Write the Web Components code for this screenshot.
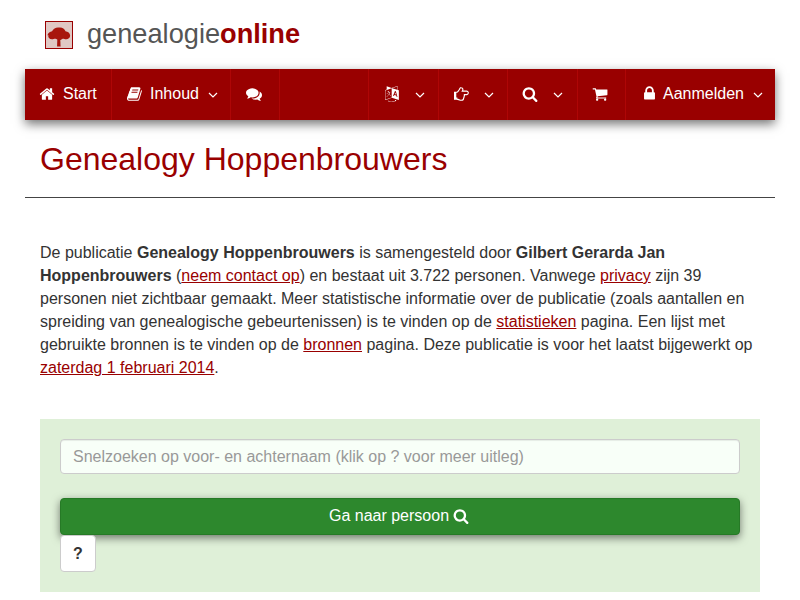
<!DOCTYPE html>
<html lang="nl">
<head>
<meta charset="utf-8">
<title>Genealogy Hoppenbrouwers</title>
<style>
html,body{margin:0;padding:0;background:#fff;height:600px;overflow:hidden}
body{font-family:"Liberation Sans",Arial,sans-serif;font-size:16px;line-height:23px;color:#333}
</style>
</head>
<body>
<go-page>
  <go-logo></go-logo>
  <go-nav>
    <go-nav-item icon="home" w="87" p="14" tg="8">Start</go-nav-item>
    <go-nav-item icon="book" w="119" p="14.5" tg="7.5" caret>Inhoud</go-nav-item>
    <go-nav-item icon="comments" w="49" p="15"></go-nav-item>
    <go-nav-item w="89"></go-nav-item>
    <go-nav-item icon="language" w="70" p="15" caret></go-nav-item>
    <go-nav-item icon="hand" w="69" p="15" cg="14" caret></go-nav-item>
    <go-nav-item icon="search" w="70" p="14" caret></go-nav-item>
    <go-nav-item icon="cart" w="48" p="13.5"></go-nav-item>
    <go-nav-item icon="lock" w="149" p="15" s="17" tg="5" caret last>Aanmelden</go-nav-item>
  </go-nav>
  <go-title>Genealogy Hoppenbrouwers</go-title>
  <go-intro>
    De publicatie <b>Genealogy Hoppenbrouwers</b> is samengesteld door <b>Gilbert Gerarda Jan Hoppenbrouwers</b> (<a href="#">neem contact op</a>) en bestaat uit 3.722 personen. Vanwege <a href="#">privacy</a> zijn 39 personen niet zichtbaar gemaakt. Meer statistische informatie over de publicatie (zoals aantallen en spreiding van genealogische gebeurtenissen) is te vinden op de <a href="#">statistieken</a> pagina. Een lijst met gebruikte bronnen is te vinden op de <a href="#">bronnen</a> pagina. Deze publicatie is voor het laatst bijgewerkt op <a href="#">zaterdag 1 februari 2014</a>.
  </go-intro>
  <go-search></go-search>
</go-page>
<script>
const FA={
home:"M1472 992v480q0 26-19 45t-45 19h-384v-384h-256v384h-384q-26 0-45-19t-19-45v-480q0-1 .5-3t.5-3l575-474 575 474q1 2 1 6zm223-69l-62 74q-8 9-21 11h-3q-13 0-21-7l-692-577-692 577q-12 8-24 7-13-2-21-11l-62-74q-8-10-7-23.5t11-21.5l719-599q32-26 76-26t76 26l244 204v-195q0-14 9-23t23-9h192q14 0 23 9t9 23v408l219 182q10 8 11 21.5t-7 23.5z",
book:"M1639 478q40 57 18 129l-275 906q-19 64-76.5 107.5t-122.5 43.5h-923q-77 0-148.5-53.5t-99.5-131.5q-24-67-2-127 0-4 3-27t4-37q1-8-3-21.5t-3-19.5q2-11 8-21t16.5-23.5 16.5-23.5q23-38 45-91.5t30-91.5q3-10 .5-30t-.5-28q3-11 17-28t17-23q21-36 42-92t25-90q1-9-2.5-32t.5-28q4-13 22-30.5t22-22.5q19-26 42.5-84.5t27.5-96.5q1-8-3-25.5t-2-26.5q2-8 9-18t18-23 17-21q8-12 16.5-30.5t15-35 16-36 19.5-32 26.5-23.5 36-11.5 47.5 5.5l-1 3q38-9 51-9h761q74 0 114 56t18 130l-274 906q-36 119-71.5 153.5t-128.5 34.5h-869q-27 0-38 15-11 16-1 43 24 70 144 70h923q29 0 56-15.5t35-41.5l300-987q7-22 5-57 38 15 59 43zm-1064 2q-4 13 2 22.5t20 9.5h608q13 0 25.5-9.5t16.5-22.5l21-64q4-13-2-22.5t-20-9.5h-608q-13 0-25.5 9.5t-16.5 22.5zm-83 256q-4 13 2 22.5t20 9.5h608q13 0 25.5-9.5t16.5-22.5l21-64q4-13-2-22.5t-20-9.5h-608q-13 0-25.5 9.5t-16.5 22.5z",
comments:"M1408 768q0 139-94 257t-256.5 186.5-353.5 68.5q-86 0-176-16-124 88-278 128-36 9-86 16h-3q-11 0-20.5-8t-11.5-21q-1-3-1-6.5t.5-6.5 2-6l2.5-5 3.5-5.5 4-5 4.5-5 4-4.5q5-6 23-25t26-29.5 22.5-29 25-38.5 20.5-44q-124-72-195-177t-71-224q0-139 94-257t256.5-186.5 353.5-68.5 353.5 68.5 256.5 186.5 94 257zm384 256q0 120-71 224.5t-195 176.5q10 24 20.5 44t25 38.5 22.5 29 26 29.5 23 25q1 1 4 4.5t4.5 5 4 5 3.5 5.5l2.5 5 2 6 .5 6.5-1 6.5q-3 14-13 22t-22 7q-50-7-86-16-154-40-278-128-90 16-176 16-271 0-472-132 58 4 88 4 161 0 309-45t264-129q125-92 192-212t67-254q0-77-23-152 129 71 204 178t75 230z",
language:"M782 1078q-1 3-12.5-.5t-31.5-11.5l-20-9q-44-20-87-49-7-5-41-31.5t-38-28.5q-67 103-134 181-81 95-105 110-4 2-19.5 4t-18.5 0q6-4 82-92 21-24 85.5-115t78.5-118q17-30 51-98.5t36-77.5q-8-1-110 33-8 2-27.5 7.5t-34.5 9.5-17 5q-2 2-2 10.5t-1 9.5q-5 10-31 15-23 7-47 0-18-4-28-21-4-6-5-23 6-2 24.5-5t29.5-6q58-16 105-32 100-35 102-35 10-2 43-19.5t44-21.5q9-3 21.5-8t14.5-5.5 6 .5q2 12-1 33 0 2-12.5 27t-26.5 53.5-17 33.5q-25 50-77 131l64 28q12 6 74.5 32t67.5 28q4 1 10.5 25.5t4.5 30.5zm-205-486q3 15-4 28-12 23-50 38-30 12-60 12-26-3-49-26-14-15-18-41l1-3q3 3 19.5 5t26.5 0 58-16q36-12 55-14 17 0 21 17zm698 129l63 227-139-42zm-1108 800l694-232v-1032l-694 233v1031zm1241-317l102 31-181-657-100-31-216 536 102 31 45-110 211 65zm-503-962l573 184v-380zm311 1323l158 13-54 160-40-66q-130 83-276 108-58 12-91 12h-84q-79 0-199.5-39t-183.5-85q-8-7-8-16 0-8 5-13.5t13-5.5q4 0 18 7.5t30.5 16.5 20.5 11q73 37 159.5 61.5t157.5 24.5q95 0 167-14.5t157-50.5q15-7 30.5-15.5t34-19 28.5-16.5zm448-1079v1079l-774-246q-14 6-375 127.5t-368 121.5q-13 0-18-13 0-1-1-3v-1078q3-9 4-10 5-6 20-11 107-36 149-50v-384l558 198q2 0 160.5-55t316-108.5 161.5-53.5q20 0 20 21v418z",
hand:"M384 1344q0-26-19-45t-45-19-45 19-19 45 19 45 45 19 45-19 19-45zm1152-576q0-51-39-89.5t-89-38.5h-576q0-20 15-48.5t33-55 33-68 15-84.5q0-67-44.5-97.5t-115.5-30.5q-24 0-90 139-24 44-37 65-40 64-112 145-71 81-101 106-69 57-140 57h-32v640h32q72 0 167 32t193.5 64 179.5 32q189 0 189-167 0-26-5-56 30-16 47.5-52.5t17.5-73.5-18-69q53-50 53-119 0-25-10-55.5t-25-47.5h331q52 0 90-38t38-90zm128-1q0 105-75.5 181t-180.5 76h-169q-4 62-37 119 3 21 3 43 0 101-60 178 1 139-85 219.5t-227 80.5q-133 0-322-69-164-59-223-59h-288q-53 0-90.5-37.5t-37.5-90.5v-640q0-53 37.5-90.5t90.5-37.5h288q10 0 21.5-4.5t23.5-14 22.5-18 24-22.5 20.5-21.5 19-21.5 14-17q65-74 100-129 13-21 33-62t37-72 40.5-63 55-49.5 69.5-17.5q125 0 206.5 67t81.5 189q0 68-22 128h374q104 0 180 76t76 179z",
search:"M1216 832q0-185-131.5-316.5t-316.5-131.5-316.5 131.5-131.5 316.5 131.5 316.5 316.5 131.5 316.5-131.5 131.5-316.5zm512 832q0 52-38 90t-90 38q-54 0-90-38l-343-342q-179 124-399 124-143 0-273.5-55.5t-225-150-150-225-55.5-273.5 55.5-273.5 150-225 225-150 273.5-55.5 273.5 55.5 225 150 150 225 55.5 273.5q0 220-124 399l343 343q37 37 37 90z",
cart:"M704 1536q0 52-38 90t-90 38-90-38-38-90 38-90 90-38 90 38 38 90zm896 0q0 52-38 90t-90 38-90-38-38-90 38-90 90-38 90 38 38 90zm128-1088v512q0 24-16.5 42.5t-40.5 21.5l-1044 122q13 60 13 70 0 16-24 64h920q26 0 45 19t19 45-19 45-45 19h-1024q-26 0-45-19t-19-45q0-11 8-31.5t16-36 21.5-40 15.5-29.5l-177-823h-204q-26 0-45-19t-19-45 19-45 45-19h256q16 0 28.5 6.5t19.5 15.5 13 24.5 8 26 5.5 29.5 4.5 26h1201q26 0 45 19t19 45z",
lock:"M640 768h512v-192q0-106-75-181t-181-75-181 75-75 181v192zm832 96v576q0 40-28 68t-68 28h-960q-40 0-68-28t-28-68v-576q0-40 28-68t68-28h32v-192q0-184 132-316t316-132 316 132 132 316v192h32q40 0 68 28t28 68z"
};
function faSvg(name,size){return `<svg width="${size}" height="${size}" viewBox="0 0 1792 1792" fill="currentColor" aria-hidden="true"><path d="${FA[name]}"/></svg>`;}
function def(tag,css,html,init){
  customElements.define(tag,class extends HTMLElement{
    constructor(){super();this.attachShadow({mode:"open"});}
    connectedCallback(){
      this.shadowRoot.innerHTML=`<style>${css}</style>`+(typeof html==="function"?html(this):html);
      if(init)init(this);
    }
  });
}
def("go-page",`:host{display:block;width:750px;margin:0 auto}`,`<slot></slot>`);
def("go-logo",`
  :host{display:flex;align-items:center;height:69px;padding-left:20px;box-sizing:border-box;gap:14px}
  .ic{display:block;width:28px;height:28px;box-sizing:border-box;border:1px solid #900;background:#e0c8c4;margin-top:1px}
  .t{font-size:27.2px;line-height:32px;color:#555;margin-top:-2px}
  b{color:#900;font-weight:700}`,
  `<svg class="ic" viewBox="0 0 28 28"><defs><filter id="b" x="-10%" y="-10%" width="120%" height="120%"><feGaussianBlur stdDeviation=".4"/></filter></defs><g filter="url(#b)" fill="#a81510"><path d="M1.500 14.500C2 11.500 4.500 10.500 6.500 10 8 7 11 5.500 14 6c3-.5 6 1 7 4 2.500.3 5 2 5 4.800 0 2.500-2.500 4-4.500 3.800-1.500 0-2.500-1-3.500-.6-1.500.6-2 1.500-3.500 1.500s-2.500-1-4-1.500c-1.500-.4-2.500.6-4 .6-3 0-4.500-2-4-4.600z"/><path d="M12.300 17h3l.4 9.500h-3.800z"/></g></svg><div class="t">genealogie<b>online</b></div>`);
def("go-nav",`:host{display:flex;height:51px;background:#990000;color:#fff;box-shadow:0 4px 10px rgba(0,0,0,.55)}`,`<slot></slot>`);
def("go-nav-item",`
  :host{display:flex;flex:none;align-items:center;box-sizing:border-box;border-right:1px solid #ae0606;color:#fff;font-size:16px}
  :host([last]){border-right:0}
  .i{display:flex;align-items:center;width:100%;height:100%;box-sizing:border-box;padding-bottom:1px}
  .ico{display:block;flex:none;margin-bottom:1px}
  .l{margin-bottom:2px}
  .c{display:block;flex:none;margin-top:1px}`,
  el=>{
    const ic=el.getAttribute("icon");
    const caret=el.hasAttribute("caret");
    const hasText=el.textContent.trim().length>0;
    const sz=el.getAttribute("s")||16;
    const tg=el.getAttribute("tg")||7;
    const p=el.getAttribute("p")||0;
    const cg=el.getAttribute("cg")||(hasText?9:15);
    return `<div class="i" style="padding-left:${p}px">${ic?faSvg(ic,sz).replace("<svg ",'<svg class="ico" '):""}${hasText?`<span class="l" style="margin-left:${tg}px"><slot></slot></span>`:""}${caret?`<svg class="c" style="margin-left:${cg}px" width="10" height="6" viewBox="0 0 10 6"><polyline points="1,1 5,5 9,1" fill="none" stroke="currentColor" stroke-width="1.200"/></svg>`:""}</div>`;
  },
  el=>{el.style.width=el.getAttribute("w")+"px";}
);
def("go-title",`
  :host{display:block;height:78px;box-sizing:border-box;border-bottom:1px solid #444;padding:20px 15px 0;color:#900;font-size:32px;line-height:38px}`,
  `<slot></slot>`);
def("go-intro",`
  :host{display:block;padding:43px 15px 0;color:#333;height:221px;box-sizing:border-box}
  ::slotted(a){color:#900}`,
  `<slot></slot>`);
def("go-search",`
  :host{display:block;margin:0 15px;background:#dff0d8;padding:20px 20px 20px;height:173px;box-sizing:border-box}
  input{display:block;width:100%;height:35px;box-sizing:border-box;border:1px solid #ccc;border-radius:4px;background:#f8fff8;padding:0 12px;font:16px "Liberation Sans",Arial,sans-serif;color:#555;box-shadow:inset 0 1px 1px rgba(0,0,0,.075)}
  input::placeholder{color:#999;opacity:1}
  .go{display:flex;align-items:center;justify-content:center;gap:4px;width:100%;height:37px;margin:24px 0 0;padding:0 2px 2px 0;border:1px solid #267a26;border-radius:4px;background:#2d882d;color:#fff;font:16px "Liberation Sans",Arial,sans-serif;box-shadow:0 3px 8px rgba(0,0,0,.5)}
  .q{display:block;position:relative;width:36px;height:37px;box-sizing:border-box;padding:0;border:1px solid #ccc;border-radius:4px;background:#fff;color:#333;font:700 16px "Liberation Sans",Arial,sans-serif}`,
  `<input type="text" placeholder="Snelzoeken op voor- en achternaam (klik op ? voor meer uitleg)"><button class="go">Ga naar persoon ${faSvg("search",16)}</button><button class="q">?</button>`);
</script>
</body>
</html>
